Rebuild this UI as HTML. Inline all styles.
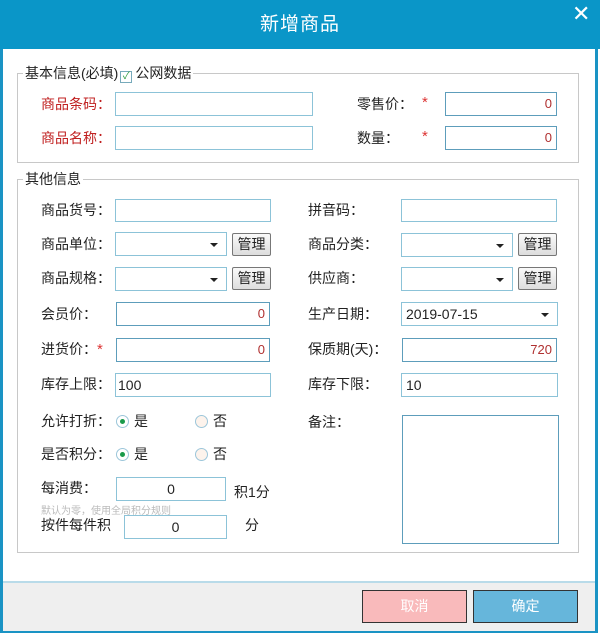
<!DOCTYPE html><html><head><meta charset="utf-8"><style>
*{margin:0;padding:0;box-sizing:border-box}
body{width:600px;height:635px;background:#fff;position:relative;overflow:hidden;font-family:"Liberation Sans","Noto Sans CJK SC",sans-serif;font-size:14px;color:#222}
.a{position:absolute}
.win{left:0;top:0;width:598px;height:633px;border:3px solid #1a93c4;background:#fff}
.title{left:0;top:0;width:600px;height:49px;background:#0a96c8;color:#fff;font-size:19px;text-align:center;line-height:49px;letter-spacing:1px}
.foot{left:3px;top:581px;width:592px;height:50px;background:#efefef;border-top:2px solid #b9dbe9}
.grp{border:1px solid #c8c8c8}
.lg{background:#fff;padding:0 2px;line-height:18px}
.l{line-height:20px}
.red{color:#c02020}
.in{border:1px solid #8cc3d8;background:#fff;height:24px;line-height:22px;padding:0 4px;font-size:13px}
.in2{border:1px solid #5d9dbb}
.r{text-align:right;color:#b03030}
.sel::after{content:"";position:absolute;right:8px;top:10px;border:4px solid transparent;border-top:4px solid #222;border-bottom:0}
.btn{border:1px solid #777;background:linear-gradient(#fafafa,#ddd);border-radius:2px;text-align:center;line-height:20px;font-size:14px}
.st{color:#d33;font-size:15px}
.rad{width:13px;height:13px;border-radius:50%;border:1px solid #9cc6da;background:#fff}
.rad.on::after{content:"";position:absolute;left:3px;top:3px;width:5px;height:5px;border-radius:50%;background:#1a9a4a}
</style></head><body>
<div class="a win"></div>
<div class="a title">新增商品</div>
<div class="a" style="left:572px;top:4px;color:#fff;font-size:22px;line-height:20px">✕</div>
<div class="a foot"></div>
<div class="a" style="left:362px;top:590px;width:105px;height:33px;background:#f9babb;border:1px solid #333;color:#fff;text-align:center;line-height:31px;font-size:14px">取消</div>
<div class="a" style="left:473px;top:590px;width:105px;height:33px;background:#66b6db;border:1px solid #333;color:#fff;text-align:center;line-height:31px;font-size:14px">确定</div>

<div class="a grp" style="left:17px;top:73px;width:562px;height:90px"></div>
<div class="a lg" style="left:23px;top:64px">基本信息(必填)<span style="display:inline-block;width:12px;height:12px;border:1px solid #7ab;vertical-align:-1px;margin:0 3px 0 2px;color:#2a9a3a;font-size:10px;line-height:10px;text-align:center">✓</span>公网数据</div>
<div class="a l red" style="left:41px;top:94px">商品条码：</div>
<div class="a in" style="left:115px;top:92px;width:198px"></div>
<div class="a l" style="left:357px;top:94px">零售价：</div><div class="a st" style="left:422px;top:94px">*</div>
<div class="a in in2 r" style="left:445px;top:92px;width:112px">0</div>
<div class="a l red" style="left:41px;top:128px">商品名称：</div>
<div class="a in" style="left:115px;top:126px;width:198px"></div>
<div class="a l" style="left:357px;top:128px">数量：</div><div class="a st" style="left:422px;top:128px">*</div>
<div class="a in in2 r" style="left:445px;top:126px;width:112px">0</div>

<div class="a grp" style="left:17px;top:179px;width:562px;height:374px"></div>
<div class="a lg" style="left:23px;top:170px">其他信息</div>

<div class="a l" style="left:41px;top:200px">商品货号：</div>
<div class="a in" style="left:115px;top:199px;width:156px;height:23px"></div>
<div class="a l" style="left:308px;top:200px">拼音码：</div>
<div class="a in" style="left:401px;top:199px;width:156px;height:23px"></div>

<div class="a l" style="left:41px;top:234px">商品单位：</div>
<div class="a in sel" style="left:115px;top:232px;width:112px"></div>
<div class="a btn" style="left:232px;top:233px;width:39px;height:23px">管理</div>
<div class="a l" style="left:308px;top:234px">商品分类：</div>
<div class="a in sel" style="left:401px;top:233px;width:112px"></div>
<div class="a btn" style="left:518px;top:233px;width:39px;height:23px">管理</div>

<div class="a l" style="left:41px;top:268px">商品规格：</div>
<div class="a in sel" style="left:115px;top:267px;width:112px"></div>
<div class="a btn" style="left:232px;top:267px;width:39px;height:23px">管理</div>
<div class="a l" style="left:308px;top:268px">供应商：</div>
<div class="a in sel" style="left:401px;top:267px;width:112px"></div>
<div class="a btn" style="left:518px;top:267px;width:39px;height:23px">管理</div>

<div class="a l" style="left:41px;top:304px">会员价：</div>
<div class="a in in2 r" style="left:116px;top:302px;width:154px">0</div>
<div class="a l" style="left:308px;top:304px">生产日期：</div>
<div class="a in sel" style="left:401px;top:302px;width:157px;font-size:14px">2019-07-15</div>

<div class="a l" style="left:41px;top:339px">进货价：<span class="st">*</span></div>
<div class="a in in2 r" style="left:116px;top:338px;width:154px">0</div>
<div class="a l" style="left:308px;top:339px">保质期(天)：</div>
<div class="a in in2 r" style="left:402px;top:338px;width:155px">720</div>

<div class="a l" style="left:41px;top:374px">库存上限：</div>
<div class="a in" style="left:115px;top:373px;width:156px;font-size:14px;padding-left:2px">100</div>
<div class="a l" style="left:308px;top:374px">库存下限：</div>
<div class="a in" style="left:401px;top:373px;width:157px;font-size:14px">10</div>

<div class="a l" style="left:41px;top:411px">允许打折：</div>
<div class="a rad on" style="left:116px;top:415px"></div><div class="a l" style="left:134px;top:411px">是</div>
<div class="a rad" style="left:195px;top:415px;background:#fdf3ec"></div><div class="a l" style="left:213px;top:411px">否</div>
<div class="a l" style="left:41px;top:444px">是否积分：</div>
<div class="a rad on" style="left:116px;top:448px"></div><div class="a l" style="left:134px;top:444px">是</div>
<div class="a rad" style="left:195px;top:448px;background:#fdf3ec"></div><div class="a l" style="left:213px;top:444px">否</div>

<div class="a l" style="left:41px;top:478px">每消费：</div>
<div class="a in" style="left:116px;top:477px;width:110px;text-align:center;font-size:14px">0</div>
<div class="a l" style="left:234px;top:482px">积1分</div>
<div class="a" style="left:41px;top:502px;font-size:10px;color:#bbb">默认为零，使用全局积分规则</div>
<div class="a l" style="left:41px;top:515px">按件每件积</div>
<div class="a in" style="left:124px;top:515px;width:103px;text-align:center;font-size:14px">0</div>
<div class="a l" style="left:245px;top:515px">分</div>

<div class="a l" style="left:308px;top:412px">备注：</div>
<div class="a in in2" style="left:402px;top:415px;width:157px;height:129px"></div>
</body></html>
